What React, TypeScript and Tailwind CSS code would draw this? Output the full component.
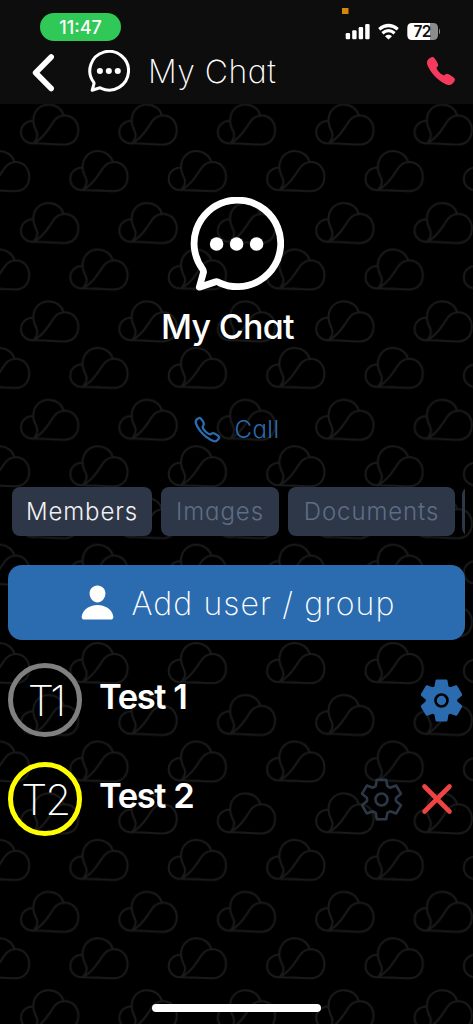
import type { ReactNode } from 'react';
import { IoCall, IoCallOutline, IoPerson } from 'react-icons/io5';

interface Member {
  initials: string;
  name: string;
  ring: string;
  tracking: string;
  isAdmin: boolean;
}

const members: Member[] = [
  { initials: 'T1', name: 'Test 1', ring: 'border-[#808080]', tracking: 'tracking-[-4px]', isAdmin: true },
  { initials: 'T2', name: 'Test 2', ring: 'border-[#ffff00]', tracking: 'tracking-[-2px]', isAdmin: false },
];

const CLOUD = [
  'M14 17.3C6 17 1 22.5 1 28.7C1 35 6 40 12.7 40',
  'M13.3 40C17 36 18.5 32 16.5 28C14.5 24 13.3 21 13.3 17C13.3 7.5 20 1 28.5 1C36 1 42 5.5 43.5 11.8',
  'M13.5 40C23 35 27 28 31 22C35 15.5 38 12 44.8 12C53 12 58.3 18.5 58.3 26.5C58.3 35 53 41 45 41C35 41 25 39.7 12.7 40',
].join('');

// one tooth, repeated every 60 degrees
const TOOTH = [[-5.9, -13.3], [-4.7, -19.7], [4.7, -19.7], [5.9, -13.3]];
const GEAR_POINTS = [0, 60, 120, 180, 240, 300]
  .flatMap((deg) => {
    const a = (deg * Math.PI) / 180;
    return TOOTH.map(([x, y]) => `${x * Math.cos(a) - y * Math.sin(a)},${x * Math.sin(a) + y * Math.cos(a)}`);
  })
  .join(' ');

function CloudWallpaper() {
  return (
    <svg className="absolute inset-0 h-full w-full" aria-hidden="true">
      <defs>
        <pattern id="clouds" width="98.4" height="98.4" patternUnits="userSpaceOnUse">
          <g fill="none" stroke="#1a1a1a" strokeWidth="2" strokeLinejoin="round">
            <path d={CLOUD} transform="translate(20 5.1)" />
            <path d={CLOUD} transform="translate(69.3 51.7)" />
            <path d={CLOUD} transform="translate(-29.1 51.7)" />
          </g>
        </pattern>
      </defs>
      <rect width="100%" height="100%" fill="url(#clouds)" />
    </svg>
  );
}

function ChatBubble({ className }: { className: string }) {
  return (
    <svg viewBox="0 0 94 94" className={className} fill="none">
      <path
        d="M12.5 72Q14 74 13.3 76L9.3 90.2L25 85Q27 84 29.5 85.8A43.3 43.3 0 1 0 12.5 72Z"
        stroke="currentColor"
        strokeWidth="6.8"
        strokeLinejoin="round"
      />
      <g fill="currentColor">
        <circle cx="26.6" cy="47" r="6.8" />
        <circle cx="46.6" cy="47" r="6.8" />
        <circle cx="66.6" cy="47" r="6.8" />
      </g>
    </svg>
  );
}

function Gear({ filled }: { filled: boolean }) {
  return (
    <svg viewBox="-21.5 -21.5 43 43" className="h-[43px] w-[43px]" strokeLinejoin="round">
      <polygon
        points={GEAR_POINTS}
        fill={filled ? '#2b6cb0' : 'none'}
        stroke={filled ? '#2b6cb0' : '#2d3748'}
        strokeWidth="2.6"
      />
      <circle r="6" fill="none" stroke={filled ? '#000' : '#2d3748'} strokeWidth="2.6" />
    </svg>
  );
}

function StatusBar() {
  return (
    <div className="flex h-[45px] items-start justify-between pl-10 pr-[34px]">
      <div className="mt-[13px] flex h-7 w-[81px] items-center justify-center rounded-full bg-[#30c957] text-[18px] font-medium">
        11:47
      </div>
      <svg width="98" height="45" className="mr-[-1px]" viewBox="342 0 98 45">
        <rect x="342" y="8" width="6.5" height="6" fill="#d5860d" />
        <g fill="#fff">
          <rect x="345.7" y="33" width="4.4" height="6.3" rx="1.2" />
          <rect x="352.2" y="30.3" width="4.4" height="9" rx="1.2" />
          <rect x="358.7" y="27" width="4.4" height="12.3" rx="1.2" />
          <rect x="365.2" y="24" width="4.4" height="15.3" rx="1.2" />
          <path d="M385 36.2Q388.5 33.4 392 36.2L388.5 39.4Z" />
        </g>
        <g fill="none" stroke="#fff" strokeWidth="3.2">
          <path d="M379.2 29.2Q388.5 21.8 397.8 29.2" />
          <path d="M382.4 33.2Q388.5 28.2 394.6 33.2" />
        </g>
        <path d="M412 23H430V40H412Q407.3 40 407.3 35V28Q407.3 23 412 23Z" fill="#fff" />
        <path d="M430 23H433Q438 23 438 28V35Q438 40 433 40H430Z" fill="#8c8c8c" />
        <path d="M439 28.5Q441.5 31.5 439 34.5Z" fill="#8c8c8c" />
        <text x="422" y="37" textAnchor="middle" fontSize="15.5" fontWeight="600" letterSpacing="-0.8" fill="#111">72</text>
      </svg>
    </div>
  );
}

function Tab({ children, active, className }: { children: ReactNode; active?: boolean; className: string }) {
  return (
    <button
      className={`flex h-[49px] shrink-0 items-center justify-center rounded-lg bg-[#2d3748] pt-px text-[24px] font-light tracking-[0.9px] ${
        active ? 'text-[#f2f2f2]' : 'text-[#5e6d86]'
      } ${className}`}
    >
      {children}
    </button>
  );
}

export default function App() {
  return (
    <div className="relative flex h-[1024px] w-[473px] flex-col overflow-hidden bg-black font-['Inter',sans-serif] text-white [font-feature-settings:'cv11']">
      <CloudWallpaper />

      <header className="relative h-[104px] shrink-0 bg-[#0d0d0d]">
        <StatusBar />
        <div className="flex items-center pl-8 pr-4">
          <svg width="22" height="38" viewBox="0 0 22 38" className="mt-[9px]" fill="none">
            <path d="M19.2 3L3.6 18.7L19.2 34.5" stroke="#fff" strokeWidth="5.6" strokeLinecap="round" strokeLinejoin="round" />
          </svg>
          <ChatBubble className="ml-[34px] mt-1 h-[42px] w-[42px]" />
          <h1 className="ml-[18px] mt-[7px] text-[32px] font-extralight leading-10 tracking-[0.5px] whitespace-nowrap">My Chat</h1>
          <IoCall className="ml-auto mt-[5px] h-[32px] w-[32px] text-[#f43a5e]" />
        </div>
      </header>

      <main className="relative flex flex-1 flex-col">
        <section className="flex flex-col items-center pt-[93px]">
          <ChatBubble className="h-[94px] w-[94px]" />
          <h2 className="mr-[18px] mt-4 text-[34px] font-medium leading-10 tracking-[-0.7px]">My Chat</h2>
          <button className="mt-[66px] flex h-8 items-center gap-[12px] text-[#2b6cb0]">
            <IoCallOutline className="h-[29px] w-[29px] [&_path]:stroke-[40px]" />
            <span className="mt-[2px] text-[24px] font-light tracking-[0.5px]">Call</span>
          </button>
        </section>

        <nav className="ml-3 mr-2 mt-[42px] flex gap-[9px] overflow-hidden">
          <Tab active className="w-[140px]">Members</Tab>
          <Tab className="w-[118px]">Images</Tab>
          <Tab className="w-[167px]">Documents</Tab>
          <Tab className="ml-[-2px] w-[90px]">{null}</Tab>
        </nav>

        <button className="mx-2 mt-[29px] flex h-[75px] shrink-0 items-center justify-center rounded-[14px] bg-[#2b6cb0]">
          <IoPerson className="h-[39px] w-[39px]" />
          <span className="ml-[15px] mt-[2px] text-[32px] font-extralight tracking-[1.1px] whitespace-nowrap">Add user / group</span>
        </button>

        <ul className="mt-[23px] flex flex-col gap-[25px] pl-2">
          {members.map((m) => (
            <li key={m.name} className="flex h-[74px] items-center">
              <div className={`flex h-[74px] w-[74px] items-center justify-center rounded-full border-5 text-[42px] font-extralight ${m.ring} ${m.tracking}`}>
                {m.initials}
              </div>
              <span className="mb-[6px] ml-[17px] text-[34.5px] font-semibold leading-10 tracking-[-1.4px] [word-spacing:1px]">{m.name}</span>
              {m.isAdmin ? (
                <div className="ml-auto mr-[10px]">
                  <Gear filled />
                </div>
              ) : (
                <div className="ml-auto mr-5 flex items-center gap-[18px]">
                  <Gear filled={false} />
                  <svg width="32" height="32" viewBox="0 0 32 32">
                    <path d="M3.5 3.5L28.5 28.5M28.5 3.5L3.5 28.5" stroke="#f04343" strokeWidth="4.6" strokeLinecap="round" />
                  </svg>
                </div>
              )}
            </li>
          ))}
        </ul>

        <div className="mx-auto mb-3 mt-auto h-2 w-[169px] rounded-full bg-white" />
      </main>
    </div>
  );
}
